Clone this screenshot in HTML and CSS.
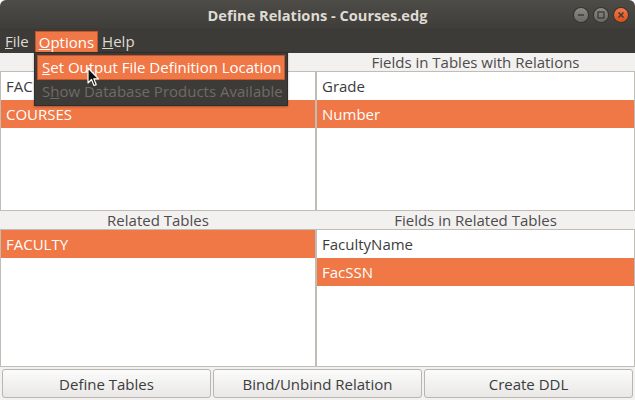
FILE: index.html
```html
<!DOCTYPE html>
<html>
<head>
<meta charset="utf-8">
<link rel="stylesheet" href="styles.css">
</head>
<body>
<div class="window">
  <div class="titlebar">
    <div class="title">Define Relations - Courses.edg</div>
    <div class="controls">
      <span class="wbtn min"><svg width="14" height="14" viewBox="0 0 14 14"><line x1="4" y1="7" x2="10" y2="7" stroke="#3c3b37" stroke-width="1.4"/></svg></span>
      <span class="wbtn max"><svg width="14" height="14" viewBox="0 0 14 14"><rect x="4" y="4" width="6" height="6" fill="none" stroke="#3c3b37" stroke-width="1.3"/></svg></span>
      <span class="wbtn close"><svg width="14" height="14" viewBox="0 0 14 14"><path d="M4.5 4.5L9.5 9.5M9.5 4.5L4.5 9.5" stroke="#3c3b37" stroke-width="1.5"/></svg></span>
    </div>
  </div>
  <div class="menubar">
    <span class="mitem"><u>F</u>ile</span>
    <span class="mitem active"><u>O</u>ptions</span>
    <span class="mitem"><u>H</u>elp</span>
  </div>
  <div class="content">
    <div class="panes">
      <div class="header"></div>
      <div class="header">Fields in Tables with Relations</div>
      <div class="list">
        <div class="row">FACULTY</div>
        <div class="row sel">COURSES</div>
      </div>
      <div class="list">
        <div class="row">Grade</div>
        <div class="row sel">Number</div>
      </div>
      <div class="header">Related Tables</div>
      <div class="header">Fields in Related Tables</div>
      <div class="list">
        <div class="row sel">FACULTY</div>
      </div>
      <div class="list">
        <div class="row">FacultyName</div>
        <div class="row sel">FacSSN</div>
      </div>
    </div>
    <div class="buttons">
      <button class="btn">Define Tables</button>
      <button class="btn">Bind/Unbind Relation</button>
      <button class="btn">Create DDL</button>
    </div>
  </div>
  <div class="dropdown">
    <div class="ditem hl"><u>S</u>et Output File Definition Location</div>
    <div class="ditem dis">S<u>h</u>ow Database Products Available</div>
  </div>
  <svg class="cursor" width="14" height="21" viewBox="0 0 14 21">
    <path d="M1 1 L1 16 L4.5 12.5 L7 18.5 L9.2 17.6 L6.8 11.8 L11.5 11.8 Z" fill="#111" stroke="#fff" stroke-width="1.2" stroke-linejoin="round"/>
  </svg>
</div>
</body>
</html>
```
FILE: styles.css
```css
* { box-sizing: border-box; }
html, body { margin: 0; padding: 0; }
body {
  width: 635px;
  height: 400px;
  overflow: hidden;
  background: #ffffff;
  font-family: "Open Sans", "Noto Sans", "DejaVu Sans", sans-serif;
}
.window {
  position: relative;
  width: 635px;
  height: 400px;
  background: #f2f1f0;
  border-radius: 6px 6px 0 0;
  overflow: hidden;
  display: flex;
  flex-direction: column;
}
.titlebar {
  height: 28px;
  background: linear-gradient(#4d4c47, #3f3e3a);
  position: relative;
  display: flex;
  align-items: center;
  justify-content: center;
}
.title {
  color: #dfdbd2;
  font-weight: bold;
  font-size: 14.6px;
  margin-top: 1px;
}
.controls {
  position: absolute;
  right: 7px;
  top: 8px;
  display: flex;
  gap: 6px;
}
.wbtn {
  width: 14px;
  height: 14px;
  border-radius: 50%;
  display: flex;
  background: linear-gradient(#8b8a85, #6a6964);
  box-shadow: 0 0 0 1px #35342f;
}
.wbtn.close { background: linear-gradient(#f5784a, #d94f1c); }
.menubar {
  height: 25px;
  background: #3c3b37;
  display: flex;
  align-items: center;
  padding-left: 5px;
}
.mitem {
  color: #dfdbd2;
  font-size: 15px;
  height: 22px;
  line-height: 20px;
  margin-top: 3px;
}
.mitem.active {
  background: #f07746;
  border: 1px solid #c4542a;
  color: #ffffff;
  padding: 0 3px;
  margin-left: 6px;
  margin-right: 4px;
}
.content {
  flex: 1;
  display: flex;
  flex-direction: column;
}
.panes {
  display: grid;
  grid-template-columns: 316px 319px;
  grid-template-rows: 18px 140px 18px 138px;
}
.header {
  font-size: 15px;
  color: #4c4c4c;
  text-align: center;
  line-height: 18px;
  white-space: nowrap;
  overflow: hidden;
}
.list {
  background: #ffffff;
  border: 1px solid #c0bdb7;
  overflow: hidden;
}
.row {
  height: 28px;
  line-height: 28px;
  padding-left: 5px;
  font-size: 15px;
  color: #3c3c3c;
}
.row.sel {
  background: #f07746;
  color: #ffffff;
}
.buttons {
  display: flex;
  gap: 2px;
  padding: 2px 2px 0 2px;
}
.btn {
  flex: 1;
  height: 29px;
  border: 1px solid #b9b6b0;
  border-radius: 3px;
  background: linear-gradient(#fbfbfb, #e9e8e6);
  font-family: inherit;
  font-size: 15px;
  color: #3c3c3c;
  padding: 0;
}
.dropdown {
  position: absolute;
  left: 34px;
  top: 52px;
  width: 254px;
  height: 54px;
  background: #3c3b37;
  border: 1px solid #2f2e2b;
  padding: 2px;
  box-shadow: 0 1px 2px rgba(0,0,0,0.3);
}
.ditem {
  height: 25px;
  line-height: 23px;
  font-size: 15px;
  padding-left: 5px;
  color: #dfdbd2;
  white-space: nowrap;
}
.ditem.hl {
  background: #f07746;
  border: 1px solid #c4542a;
  color: #ffffff;
  padding-left: 4px;
}
.ditem.dis { color: #6e6c66; }
.cursor {
  position: absolute;
  left: 87px;
  top: 67px;
}
```
